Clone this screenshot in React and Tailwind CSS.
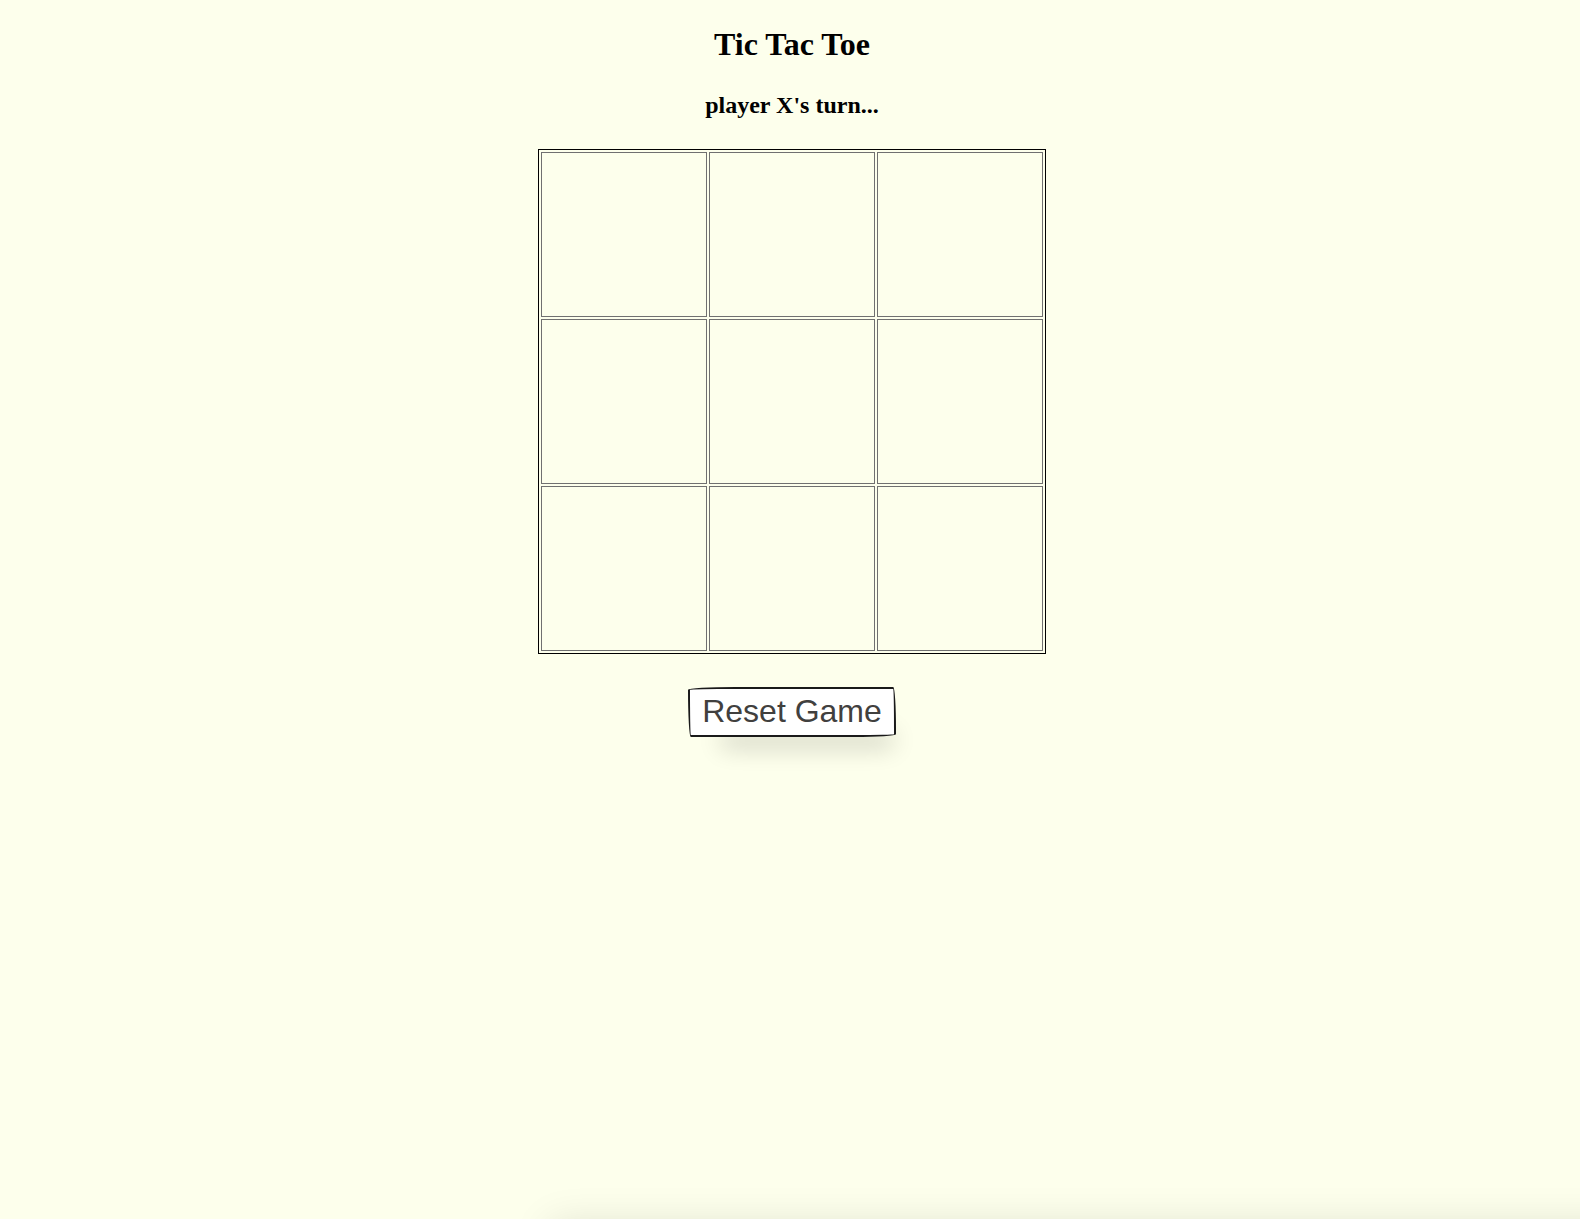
import React from "react";

export default function App() {
  const cells = Array.from({ length: 9 });
  return (
    <div className="relative min-h-screen w-full overflow-hidden bg-[#fdffec] font-['Liberation_Serif',serif] text-black">
      <div className="flex flex-col items-center pl-[4px]">
        <h1 className="mt-[26px] text-[32px] font-bold leading-[37px]">Tic Tac Toe</h1>
        <h2 className="mt-[28px] text-[24px] font-bold leading-[28px]">player X's turn...</h2>
        <div className="mt-[30px] grid grid-cols-3 gap-[2px] border border-black p-[2px]">
          {cells.map((_, i) => (
            <button
              key={i}
              className="h-[165px] w-[166px] border border-[#707070] bg-transparent"
            />
          ))}
        </div>
        <button className="mt-[33px] rounded-[255px_15px_225px_15px/15px_225px_15px_255px] border-2 border-[#1a1a1a] bg-white px-[12px] pt-[4px] pb-[5px] font-['Liberation_Sans',Arial,sans-serif] text-[32px] leading-[37px] text-[#41403e] shadow-[15px_28px_25px_-18px_rgba(0,0,0,0.2)]">
          Reset Game
        </button>
      </div>
      <div className="absolute left-[550px] right-[-60px] top-[1224px] h-[100px] shadow-[0_0_40px_0_rgba(0,0,0,0.12)]" />
    </div>
  );
}
